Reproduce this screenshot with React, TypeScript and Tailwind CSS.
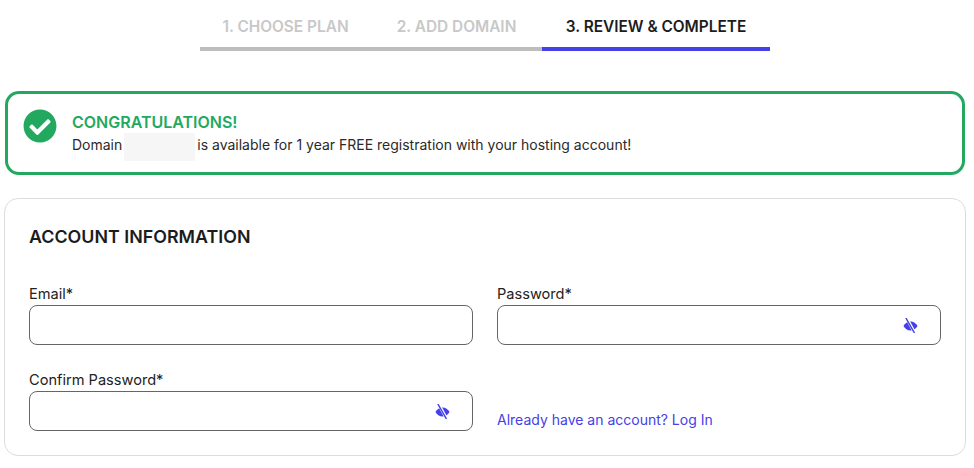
import { FaCheckCircle } from 'react-icons/fa';

const steps = [
  { label: '1. CHOOSE PLAN', width: 'w-[171px]', active: false },
  { label: '2. ADD DOMAIN', width: 'w-[171px]', active: false },
  { label: '3. REVIEW & COMPLETE', width: 'w-[228px]', active: true },
];

function EyeOff() {
  return (
    <svg viewBox="0 0 16 16" className="h-[15px] w-[15px] text-[#4540e8]">
      <path d="M.5 8.500C2 5.600 4.800 3.700 8 3.700s6 1.900 7.500 4.800C14 11.400 11.200 13.300 8 13.300S2 11.400.5 8.500z" fill="currentColor" />
      <line x1="3.500" y1="-.5" x2="12.500" y2="16" stroke="white" strokeWidth="3.200" />
      <line x1="3.300" y1=".5" x2="12" y2="15.500" stroke="currentColor" strokeWidth="1.500" strokeLinecap="round" />
    </svg>
  );
}

function Field({ label, secret }: { label: string; secret?: boolean }) {
  return (
    <div>
      <label className="mb-[2px] block text-[14.6px] leading-[18px] text-[#222]">{label}</label>
      <div className="flex h-10 items-center justify-end rounded-[8px] border border-[#666] bg-white pr-[22px]">
        {secret && <EyeOff />}
      </div>
    </div>
  );
}

export default function App() {
  return (
    <div className="h-[468px] w-[974px] overflow-hidden bg-white font-['Inter',sans-serif]">
      <div className="flex justify-center pt-[15px] pr-[4px]">
        {steps.map((step) => (
          <div
            key={step.label}
            className={`${step.width} whitespace-nowrap border-b-[4px] pb-[8px] text-center text-[15.4px] leading-[24px] font-semibold ${
              step.active ? 'border-[#4540e8] text-[#1c1c1c]' : 'border-[#bdbdbd] text-[#c8c8c8]'
            }`}
          >
            {step.label}
          </div>
        ))}
      </div>

      <div className="ml-[5px] mr-[9px] mt-[40px] flex h-[84px] items-start rounded-[14px] border-[3px] border-[#22a95f] pl-[15px] pt-[15px]">
        <FaCheckCircle className="h-[34px] w-[34px] text-[#22a95f]" />
        <div className="ml-[15px] pt-[1px]">
          <div className="text-[16px] leading-[24px] font-semibold text-[#22a95f]">CONGRATULATIONS!</div>
          <div className="flex items-center text-[14px] leading-[22px] text-[#2a2a2a]">
            Domain
            <span className="mx-[2px] -mt-[1px] -mb-[5px] h-[28px] w-[71px] bg-[#f6f6f7]" />
            is available for 1 year FREE registration with your hosting account!
          </div>
        </div>
      </div>

      <div className="ml-[4px] mr-[8px] mt-[23px] h-[258px] rounded-[14px] border border-[#dcdcdc] px-6 pt-[26px]">
        <h2 className="text-[17.85px] leading-[24px] font-semibold text-[#1c1c1c]">ACCOUNT INFORMATION</h2>
        <div className="mt-[36px] grid grid-cols-2 gap-x-6 gap-y-[26px]">
          <Field label="Email*" />
          <Field label="Password*" secret />
          <Field label="Confirm Password*" secret />
          <div className="flex items-end pb-[1px]">
            <a className="text-[14px] leading-[20px] text-[#4540e8]">Already have an account? Log In</a>
          </div>
        </div>
      </div>
    </div>
  );
}
